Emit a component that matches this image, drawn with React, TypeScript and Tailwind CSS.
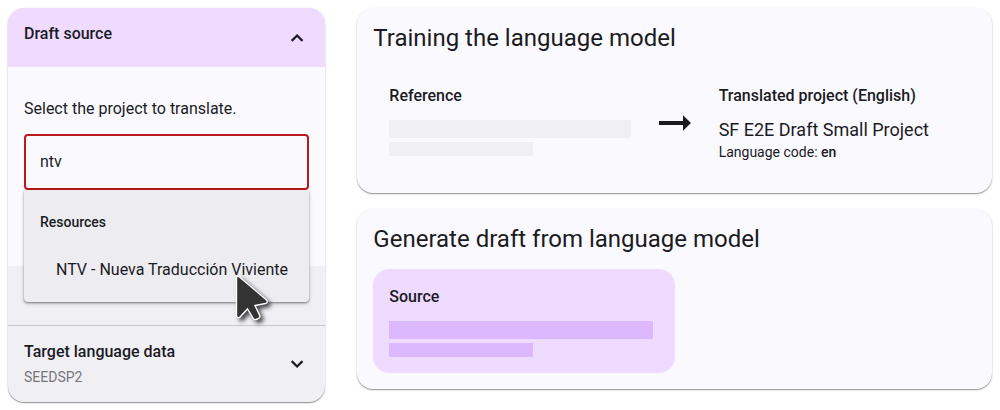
import React, { useState } from "react";

function Chevron({ up = false }: { up?: boolean }) {
  return (
    <svg className="size-6 shrink-0" viewBox="0 0 24 24" fill="none" stroke="#1b1b1f" strokeWidth="2.2" aria-hidden="true">
      <path d={up ? "M6.7 14.9 12.1 9.5l5.4 5.4" : "M6.7 9.1 12.1 14.5l5.4-5.4"} />
    </svg>
  );
}

function Arrow() {
  return (
    <svg className="h-4 w-8" viewBox="0 0 32 16" fill="#1b1b1f" aria-hidden="true">
      <path d="M0 6h24V0.200L32 8l-8 7.800V10H0z" />
    </svg>
  );
}

function Pointer() {
  return (
    <svg
      className="pointer-events-none absolute top-[83px] left-[209px] h-[52px] w-[40px] drop-shadow-[3px_3px_2px_rgba(0,0,0,0.7)]"
      viewBox="0 0 40 52"
      aria-hidden="true"
    >
      <path
        d="M3.5 4.5Q4.5 2.5 6.500 4L33 26.500Q36 29.500 32.500 30.500L22 32.500L27 43Q27 45.500 23 46.500Q21 47 20 45L14.500 36L6.500 44.500Q3.500 45 3.500 42.500Z"
        fill="#333"
        stroke="#fff"
        strokeWidth="1.4"
      />
    </svg>
  );
}

function Card({ title, children }: { title: string; children: React.ReactNode }) {
  return (
    <section className="rounded-2xl bg-[#faf9fe] px-4 pt-3.5 pb-4 shadow-[0_1px_1px_rgba(0,0,0,0.35),0_1px_3px_rgba(0,0,0,0.12)]">
      <h2 className="mb-3.5 text-2xl leading-8">{title}</h2>
      {children}
    </section>
  );
}

function Placeholder({ tone }: { tone: string }) {
  return (
    <div className="mt-3 flex flex-col gap-1">
      <div className={`h-[18px] w-full max-w-[264px] ${tone}`} />
      <div className={`h-[14px] w-36 ${tone}`} />
    </div>
  );
}

export default function App() {
  const [query, setQuery] = useState("ntv");

  return (
    <main className="grid grid-cols-[1fr_2fr] items-start gap-8 p-2 font-[Roboto,sans-serif] text-base text-[#1b1b1f]">
      <aside className="rounded-2xl bg-[#f0eff4] shadow-[0_1px_1px_rgba(0,0,0,0.35),0_1px_3px_rgba(0,0,0,0.12)]">
        <button type="button" className="flex h-[59px] w-full items-center justify-between rounded-t-2xl bg-[#eedbff] px-4 text-left">
          <span className="mb-2 font-medium">Draft source</span>
          <Chevron up />
        </button>
        <div className="bg-[#faf9fe] px-4 pt-[30px] pb-[76px]">
          <label htmlFor="project" className="mb-[13px] block leading-6">
            Select the project to translate.
          </label>
          <div className="relative">
            <input
              id="project"
              type="text"
              value={query}
              onChange={(e) => setQuery(e.target.value)}
              className="block h-14 w-full rounded border-2 border-[#ba1a1a] bg-transparent px-3.5 pb-0.5 outline-none"
            />
            <div className="absolute inset-x-0 top-full rounded-b bg-[#edecf1] py-2 shadow-[0_1px_2px_rgba(0,0,0,0.4),0_2px_4px_rgba(0,0,0,0.15)]">
              <div className="flex h-12 items-center px-4 text-sm font-medium">Resources</div>
              <button type="button" className="flex h-12 w-full items-center pl-8 text-left whitespace-nowrap">
                NTV - Nueva Traducción Viviente
              </button>
              <Pointer />
            </div>
          </div>
        </div>
        <button type="button" className="mt-[59px] flex h-[77px] w-full items-center justify-between border-t border-[#c7c6ca] px-4 text-left">
          <span className="flex flex-col pt-0.5">
            <span className="leading-6 font-medium">Target language data</span>
            <span className="text-sm leading-[26px] text-[#76767a]">SEEDSP2</span>
          </span>
          <Chevron />
        </button>
      </aside>

      <div className="flex flex-col gap-4">
        <Card title="Training the language model">
          <div className="grid grid-cols-[1fr_auto_1fr] items-center">
            <div className="self-start p-4">
              <h3 className="font-medium">Reference</h3>
              <Placeholder tone="bg-[#f0eff4]" />
            </div>
            <div className="px-3">
              <Arrow />
            </div>
            <div className="px-4 pt-4 pb-[15px] whitespace-nowrap">
              <h3 className="font-medium">Translated project (English)</h3>
              <p className="mt-2.5 text-lg leading-6">SF E2E Draft Small Project</p>
              <p className="text-sm leading-5">
                Language code: <strong className="font-medium">en</strong>
              </p>
            </div>
          </div>
        </Card>
        <Card title="Generate draft from language model">
          <div className="w-1/2 rounded-2xl bg-[#eedbff] p-4">
            <h3 className="font-medium">Source</h3>
            <Placeholder tone="bg-[#dcb8ff]" />
          </div>
        </Card>
      </div>
    </main>
  );
}
